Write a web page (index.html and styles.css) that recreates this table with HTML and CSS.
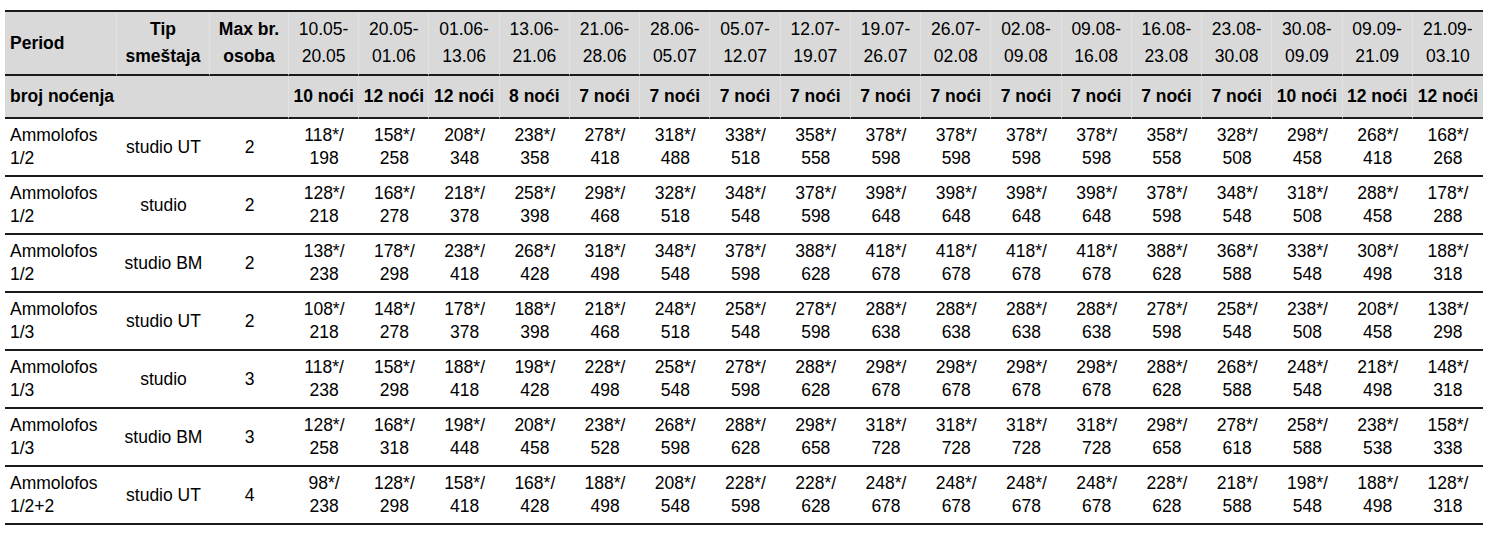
FILE: index.html
```html
<!DOCTYPE html>
<html lang="sr">
<head>
<meta charset="utf-8">
<title>Cenovnik</title>
<link rel="stylesheet" href="styles.css">
</head>
<body>
<table class="prices">
  <colgroup>
    <col class="c-period"><col class="c-tip"><col class="c-max">
    <col><col><col><col><col><col><col><col><col><col><col><col><col><col><col><col><col>
  </colgroup>
  <thead>
    <tr class="head">
      <th class="left">Period</th>
      <th>Tip<br>smeštaja</th>
      <th>Max br.<br>osoba</th>
      <td>10.05-<br>20.05</td><td>20.05-<br>01.06</td><td>01.06-<br>13.06</td><td>13.06-<br>21.06</td>
      <td>21.06-<br>28.06</td><td>28.06-<br>05.07</td><td>05.07-<br>12.07</td><td>12.07-<br>19.07</td>
      <td>19.07-<br>26.07</td><td>26.07-<br>02.08</td><td>02.08-<br>09.08</td><td>09.08-<br>16.08</td>
      <td>16.08-<br>23.08</td><td>23.08-<br>30.08</td><td>30.08-<br>09.09</td><td>09.09-<br>21.09</td>
      <td>21.09-<br>03.10</td>
    </tr>
    <tr class="nights">
      <th class="left" colspan="3">broj noćenja</th>
      <th>10 noći</th><th>12 noći</th><th>12 noći</th><th>8 noći</th><th>7 noći</th><th>7 noći</th>
      <th>7 noći</th><th>7 noći</th><th>7 noći</th><th>7 noći</th><th>7 noći</th><th>7 noći</th>
      <th>7 noći</th><th>7 noći</th><th>10 noći</th><th>12 noći</th><th>12 noći</th>
    </tr>
  </thead>
  <tbody>
    <tr>
      <td class="left">Ammolofos<br>1/2</td><td>studio UT</td><td>2</td>
      <td>118*/<br>198</td><td>158*/<br>258</td><td>208*/<br>348</td><td>238*/<br>358</td><td>278*/<br>418</td><td>318*/<br>488</td><td>338*/<br>518</td><td>358*/<br>558</td><td>378*/<br>598</td><td>378*/<br>598</td><td>378*/<br>598</td><td>378*/<br>598</td><td>358*/<br>558</td><td>328*/<br>508</td><td>298*/<br>458</td><td>268*/<br>418</td><td>168*/<br>268</td>
    </tr>
    <tr>
      <td class="left">Ammolofos<br>1/2</td><td>studio</td><td>2</td>
      <td>128*/<br>218</td><td>168*/<br>278</td><td>218*/<br>378</td><td>258*/<br>398</td><td>298*/<br>468</td><td>328*/<br>518</td><td>348*/<br>548</td><td>378*/<br>598</td><td>398*/<br>648</td><td>398*/<br>648</td><td>398*/<br>648</td><td>398*/<br>648</td><td>378*/<br>598</td><td>348*/<br>548</td><td>318*/<br>508</td><td>288*/<br>458</td><td>178*/<br>288</td>
    </tr>
    <tr>
      <td class="left">Ammolofos<br>1/2</td><td>studio BM</td><td>2</td>
      <td>138*/<br>238</td><td>178*/<br>298</td><td>238*/<br>418</td><td>268*/<br>428</td><td>318*/<br>498</td><td>348*/<br>548</td><td>378*/<br>598</td><td>388*/<br>628</td><td>418*/<br>678</td><td>418*/<br>678</td><td>418*/<br>678</td><td>418*/<br>678</td><td>388*/<br>628</td><td>368*/<br>588</td><td>338*/<br>548</td><td>308*/<br>498</td><td>188*/<br>318</td>
    </tr>
    <tr>
      <td class="left">Ammolofos<br>1/3</td><td>studio UT</td><td>2</td>
      <td>108*/<br>218</td><td>148*/<br>278</td><td>178*/<br>378</td><td>188*/<br>398</td><td>218*/<br>468</td><td>248*/<br>518</td><td>258*/<br>548</td><td>278*/<br>598</td><td>288*/<br>638</td><td>288*/<br>638</td><td>288*/<br>638</td><td>288*/<br>638</td><td>278*/<br>598</td><td>258*/<br>548</td><td>238*/<br>508</td><td>208*/<br>458</td><td>138*/<br>298</td>
    </tr>
    <tr>
      <td class="left">Ammolofos<br>1/3</td><td>studio</td><td>3</td>
      <td>118*/<br>238</td><td>158*/<br>298</td><td>188*/<br>418</td><td>198*/<br>428</td><td>228*/<br>498</td><td>258*/<br>548</td><td>278*/<br>598</td><td>288*/<br>628</td><td>298*/<br>678</td><td>298*/<br>678</td><td>298*/<br>678</td><td>298*/<br>678</td><td>288*/<br>628</td><td>268*/<br>588</td><td>248*/<br>548</td><td>218*/<br>498</td><td>148*/<br>318</td>
    </tr>
    <tr>
      <td class="left">Ammolofos<br>1/3</td><td>studio BM</td><td>3</td>
      <td>128*/<br>258</td><td>168*/<br>318</td><td>198*/<br>448</td><td>208*/<br>458</td><td>238*/<br>528</td><td>268*/<br>598</td><td>288*/<br>628</td><td>298*/<br>658</td><td>318*/<br>728</td><td>318*/<br>728</td><td>318*/<br>728</td><td>318*/<br>728</td><td>298*/<br>658</td><td>278*/<br>618</td><td>258*/<br>588</td><td>238*/<br>538</td><td>158*/<br>338</td>
    </tr>
    <tr>
      <td class="left">Ammolofos<br>1/2+2</td><td>studio UT</td><td>4</td>
      <td>98*/<br>238</td><td>128*/<br>298</td><td>158*/<br>418</td><td>168*/<br>428</td><td>188*/<br>498</td><td>208*/<br>548</td><td>228*/<br>598</td><td>228*/<br>628</td><td>248*/<br>678</td><td>248*/<br>678</td><td>248*/<br>678</td><td>248*/<br>678</td><td>228*/<br>628</td><td>218*/<br>588</td><td>198*/<br>548</td><td>188*/<br>498</td><td>128*/<br>318</td>
    </tr>
  </tbody>
</table>
</body>
</html>
```
FILE: styles.css
```css
html, body {
  margin: 0;
  padding: 0;
  background: #ffffff;
}

body {
  font-family: "Liberation Sans", Arial, sans-serif;
  font-size: 17.5px;
  color: #000000;
}

.prices {
  margin: 10px 0 0 5px;
  width: 1478px;
  table-layout: fixed;
  border-collapse: separate;
  border-spacing: 0;
  border-top: 2px solid #1a1a1a;
}

.c-period { width: 112px; }
.c-tip { width: 93px; }
.c-max { width: 79px; }

.prices th,
.prices td {
  padding: 0;
  text-align: center;
  vertical-align: middle;
  white-space: nowrap;
  border-bottom: 2px solid #1a1a1a;
  font-weight: normal;
}

.prices .left {
  text-align: left;
  padding-left: 5px;
}

.head th,
.head td {
  background: #d9d9d9;
  height: 62px;
  line-height: 27px;
  border-right: 1px solid #e2e2e2;
}

.head th {
  font-weight: bold;
}

.nights th {
  background: #d9d9d9;
  height: 41px;
  line-height: 23px;
  font-weight: bold;
  border-right: 1px solid #e2e2e2;
}

.head > :last-child,
.nights > :last-child {
  border-right: 0;
}

tbody td {
  height: 56px;
  line-height: 23px;
}
```
